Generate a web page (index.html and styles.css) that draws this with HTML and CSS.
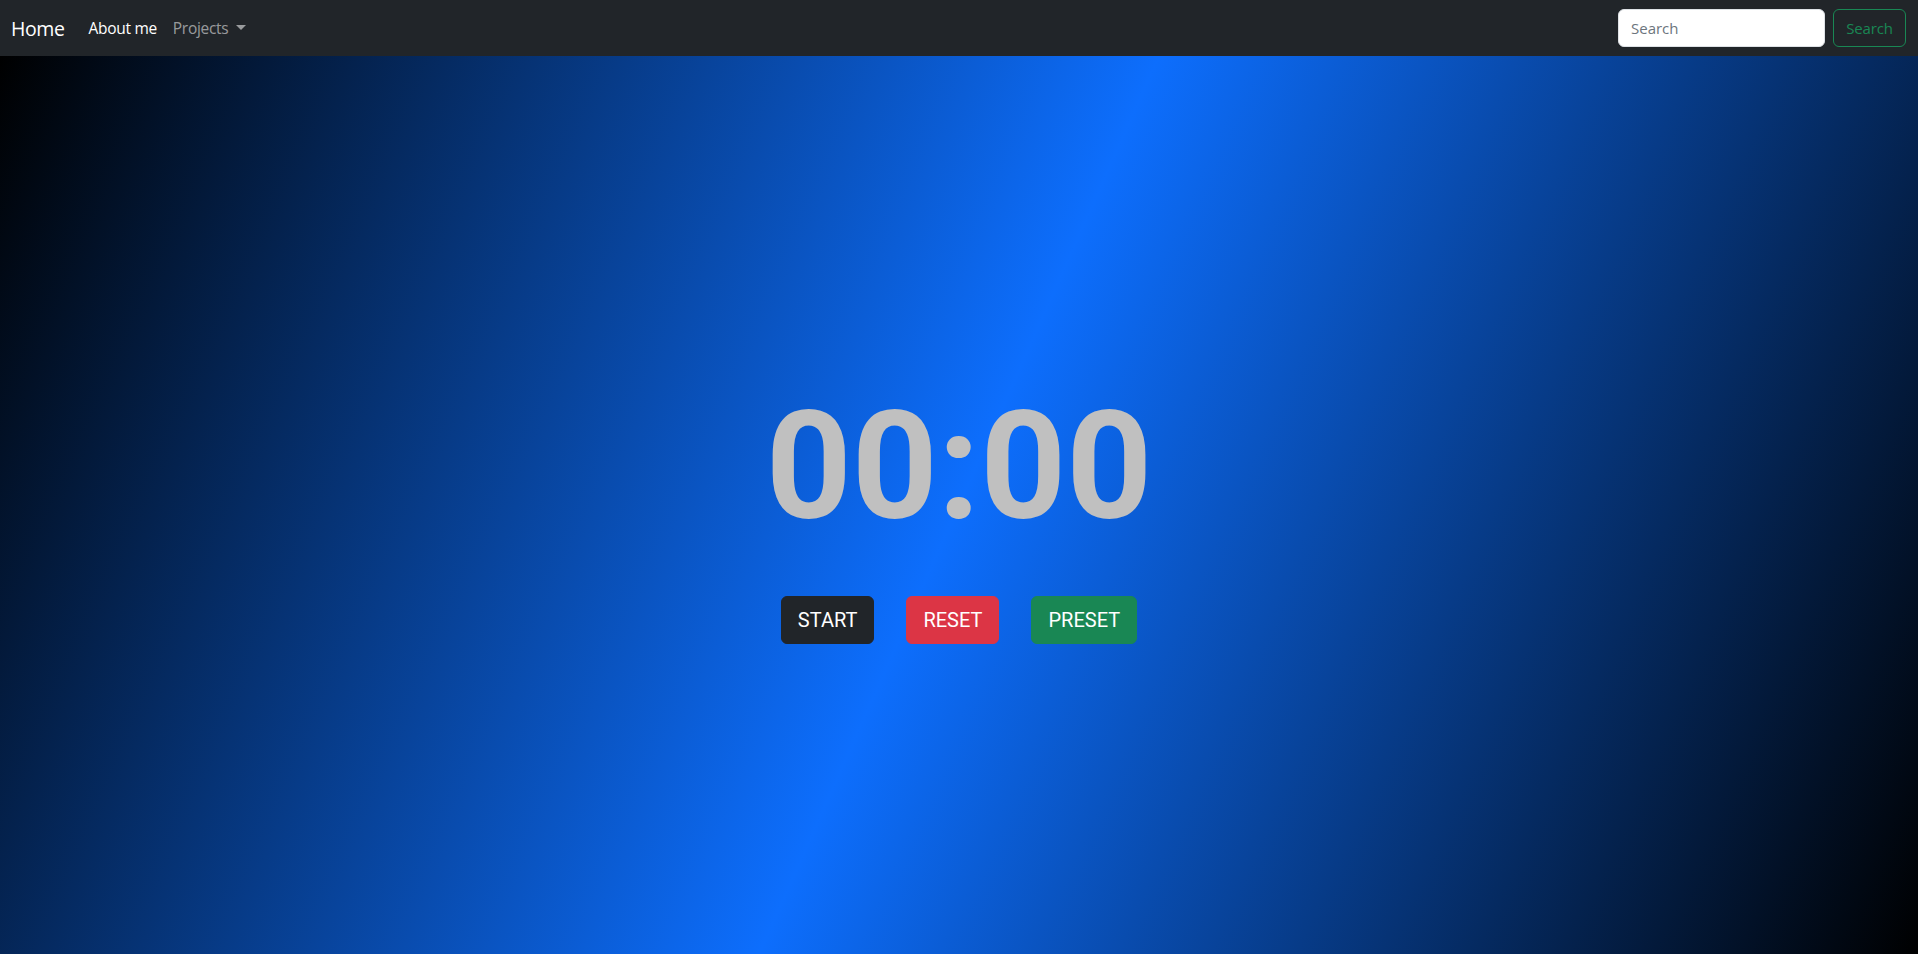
FILE: index.html
```html
<!DOCTYPE html>
<html lang="en">
<head>
<meta charset="utf-8">
<title>Timer</title>
<link rel="stylesheet" href="styles.css">
</head>
<body>
<nav class="navbar">
  <div class="nav-left">
    <a class="brand" href="#">Home</a>
    <ul class="nav-list">
      <li><a class="nav-link active" href="#">About me</a></li>
      <li><a class="nav-link" href="#">Projects<span class="caret"></span></a></li>
    </ul>
  </div>
  <form class="search-form">
    <input class="search-input" type="search" placeholder="Search">
    <button class="search-btn" type="button">Search</button>
  </form>
</nav>
<main class="stage">
  <div class="timer">00:00</div>
  <div class="controls">
    <button class="btn btn-dark" type="button">START</button>
    <button class="btn btn-red" type="button">RESET</button>
    <button class="btn btn-green" type="button">PRESET</button>
  </div>
</main>
</body>
</html>
```

FILE: styles.css
```css
* { box-sizing: border-box; }
html, body { margin: 0; padding: 0; height: 100%; }
body {
  font-family: "Open Sans", "Liberation Sans", sans-serif;
  display: flex;
  flex-direction: column;
  background: #000;
}
.navbar {
  height: 56px;
  flex: 0 0 56px;
  background: #212529;
  display: flex;
  align-items: center;
  justify-content: space-between;
  padding: 0 12px;
}
.nav-left { display: flex; align-items: center; }
.brand {
  color: #fff;
  text-decoration: none;
  font-size: 19.5px;
  margin-left: -1px;
  margin-right: 16px;
  letter-spacing: -0.4px;
}
.nav-list { list-style: none; margin: 0; padding: 0; display: flex; }
.nav-link {
  display: block;
  padding: 8px;
  font-size: 15.5px;
  color: rgba(255,255,255,0.55);
  text-decoration: none;
  letter-spacing: -0.3px;
}
.nav-link.active { color: #fff; }
.caret {
  display: inline-block;
  margin-left: 8px;
  vertical-align: 4px;
  border-top: 5px solid;
  border-right: 5px solid transparent;
  border-left: 5px solid transparent;
}
.search-form { display: flex; align-items: center; gap: 8px; margin: 0; }
.search-input {
  width: 207px;
  height: 38px;
  padding: 6px 12px;
  border: 1px solid #dee2e6;
  border-radius: 6px;
  font-family: inherit;
  font-size: 15px;
  color: #212529;
  background: #fff;
}
.search-input::placeholder { color: #6c757d; }
.search-btn {
  width: 73px;
  height: 38px;
  padding: 6px 10px;
  border: 1px solid #198754;
  border-radius: 6px;
  background: transparent;
  color: #198754;
  font-family: inherit;
  font-size: 15px;
  letter-spacing: -0.2px;
}
.stage {
  flex: 1;
  display: flex;
  flex-direction: column;
  align-items: center;
  justify-content: center;
  padding-top: 14px;
  background: linear-gradient(114deg, #000 0%, #0d6efd 50%, #000 100%);
}
.timer {
  font-family: Roboto, "Liberation Sans", sans-serif;
  font-weight: 700;
  font-size: 150px;
  line-height: 1.172;
  color: #c0c0c0;
  margin-bottom: 40px;
}
.controls { display: flex; gap: 32px; }
.btn {
  font-family: Roboto, "Liberation Sans", sans-serif;
  font-size: 20px;
  line-height: 30px;
  padding: 8px 16px;
  border: 1px solid transparent;
  border-radius: 6px;
  color: #fff;
}
.btn-dark { background: #212529; border-color: #212529; }
.btn-red { background: #dc3545; border-color: #dc3545; }
.btn-green { background: #198754; border-color: #198754; }
```
